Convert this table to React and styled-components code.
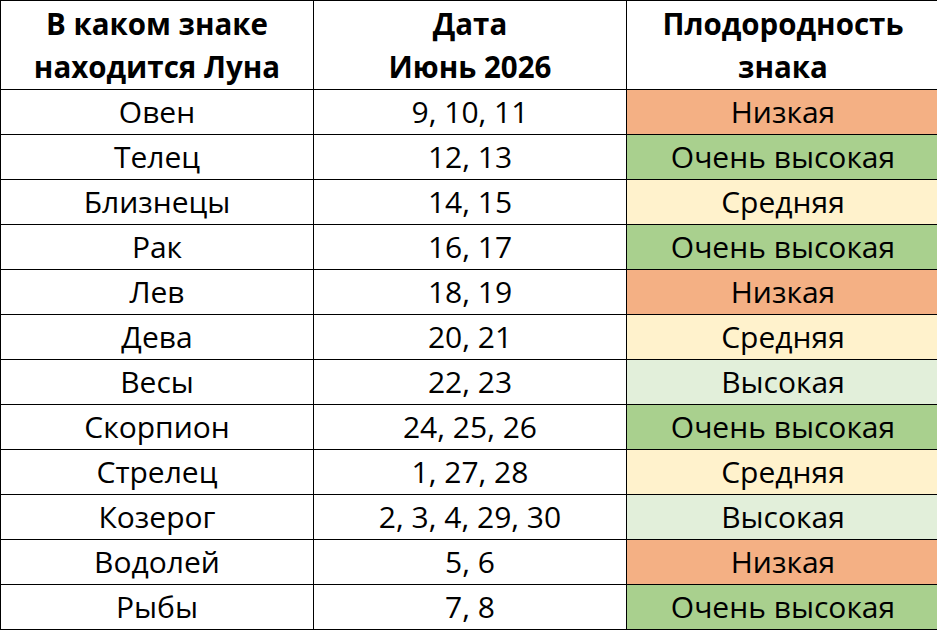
import React from 'react';
import styled, { createGlobalStyle } from 'styled-components';

const GlobalStyle = createGlobalStyle`
	body {
		margin: 0;
		background: #fff;
		font-family: "Open Sans", "Noto Sans", sans-serif;
	}
`;

const Table = styled.table`
	border-collapse: collapse;
	width: 935px;
	table-layout: fixed;
	color: #000;
`;

const HeadCell = styled.th`
	width: 312px;
	height: 88px;
	border: 1.5px solid #000;
	font-size: 29.5px;
	font-weight: 700;
	line-height: 43px;
	text-align: center;
	padding: 0;
`;

const Cell = styled.td`
	height: 44px;
	border: 1.5px solid #000;
	font-size: 30px;
	line-height: 40px;
	text-align: center;
	padding: 0;
	white-space: nowrap;
	background: ${(p) => p.$bg || '#fff'};
`;

const levels = {
	low: { label: 'Низкая', bg: '#f4b084' },
	mid: { label: 'Средняя', bg: '#fff2cc' },
	high: { label: 'Высокая', bg: '#e2efda' },
	top: { label: 'Очень высокая', bg: '#a9d08e' },
};

const rows = [
	['Овен', '9, 10, 11', 'low'],
	['Телец', '12, 13', 'top'],
	['Близнецы', '14, 15', 'mid'],
	['Рак', '16, 17', 'top'],
	['Лев', '18, 19', 'low'],
	['Дева', '20, 21', 'mid'],
	['Весы', '22, 23', 'high'],
	['Скорпион', '24, 25, 26', 'top'],
	['Стрелец', '1, 27, 28', 'mid'],
	['Козерог', '2, 3, 4, 29, 30', 'high'],
	['Водолей', '5, 6', 'low'],
	['Рыбы', '7, 8', 'top'],
];

export default function App() {
	return (
		<>
			<GlobalStyle />
			<Table>
				<thead>
					<tr>
						<HeadCell>В каком знаке<br />находится Луна</HeadCell>
						<HeadCell>Дата<br />Июнь 2026</HeadCell>
						<HeadCell>Плодородность<br />знака</HeadCell>
					</tr>
				</thead>
				<tbody>
					{rows.map(([sign, dates, level]) => (
						<tr key={sign}>
							<Cell>{sign}</Cell>
							<Cell>{dates}</Cell>
							<Cell $bg={levels[level].bg}>{levels[level].label}</Cell>
						</tr>
					))}
				</tbody>
			</Table>
		</>
	);
}
